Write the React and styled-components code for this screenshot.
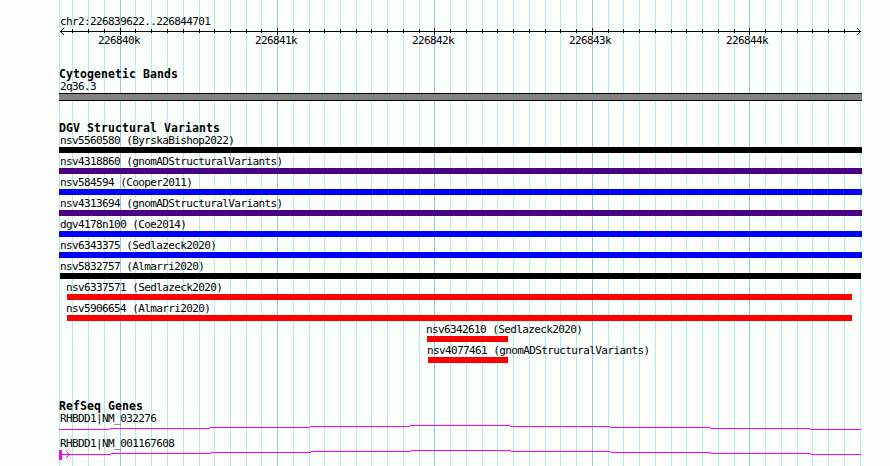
import styled, { createGlobalStyle } from "styled-components"

const GlobalStyle = createGlobalStyle`
  body {
    margin: 0;
    background-color: #fcfefc;
  }
`

const Browser = styled.main`
  position: relative;
  width: 890px;
  height: 466px;
  box-sizing: border-box;
  padding: 14px 28px 0 59px;
  overflow: hidden;
  background-color: #fcfefc;
  color: #000;
  font-family: "DejaVu Sans Mono", monospace;
`

const GridLayer = styled.svg`
  position: absolute;
  top: 0;
  left: 0;
  shape-rendering: crispEdges;
`

const Track = styled.section`
  position: relative;
  display: flex;
  flex-direction: column;
  height: ${(props) => props.$height}px;
`

const TrackTitle = styled.h2`
  margin: 0;
  height: 12px;
  font-size: 11.5px;
  font-weight: bold;
  line-height: 12px;
  letter-spacing: 0.077px;
  white-space: pre;
`

const Label = styled.span`
  display: block;
  height: 13px;
  margin-left: ${(props) => props.$indent || 1}px;
  font-size: 11px;
  line-height: 13px;
  letter-spacing: -0.61px;
  white-space: pre;
`

const RegionLabel = styled(Label)`
  height: 14px;
  line-height: 15px;
`

const Drawing = styled.svg`
  display: block;
  flex: none;
  shape-rendering: crispEdges;
`

const ScaleLabels = styled.div`
  display: flex;
  gap: 115px;
  padding-left: 39px;
`

const ScaleLabel = styled(Label)`
  width: 42px;
  margin-left: 0;
  line-height: 11px;
`

const Band = styled.div`
  box-sizing: border-box;
  width: 803px;
  height: 8px;
  border: solid #000;
  border-width: 1px 0;
  background-color: #848284;
`

const Feature = styled.div`
  height: 21px;
`

const Bar = styled.div`
  width: ${(props) => props.$width}px;
  height: 6px;
  margin-left: ${(props) => props.$start}px;
  background-color: ${(props) => props.$color};
`

const GRID = [
  59, 72, 88, 104, 120, 135, 151, 167, 183, 199, 214, 230, 246, 261, 277, 293, 309, 324,
  340, 356, 371, 387, 403, 419, 434, 450, 466, 482, 497, 513, 529, 545, 560, 576, 592,
  608, 623, 639, 655, 671, 686, 702, 718, 734, 749, 765, 781, 797, 812, 828, 844, 860,
]
const MAJOR = [120, 277, 434, 592, 749]

const SCALE = ["226840k", "226841k", "226842k", "226843k", "226844k"]

const BLACK = "#000"
const PURPLE = "#4b0082"
const BLUE = "#00f"
const RED = "#f00"

const VARIANTS = [
  { name: "nsv5560580 (ByrskaBishop2022)", start: 0, width: 803, color: BLACK },
  { name: "nsv4318860 (gnomADStructuralVariants)", start: 0, width: 803, color: PURPLE },
  { name: "nsv584594 (Cooper2011)", start: 0, width: 803, color: BLUE },
  { name: "nsv4313694 (gnomADStructuralVariants)", start: 0, width: 803, color: PURPLE },
  { name: "dgv4178n100 (Coe2014)", start: 0, width: 803, color: BLUE },
  { name: "nsv6343375 (Sedlazeck2020)", start: 0, width: 803, color: BLUE },
  { name: "nsv5832757 (Almarri2020)", start: 1, width: 801, color: BLACK },
  { name: "nsv6337571 (Sedlazeck2020)", start: 8, width: 785, color: RED, indent: 7 },
  { name: "nsv5906654 (Almarri2020)", start: 8, width: 785, color: RED, indent: 7 },
  { name: "nsv6342610 (Sedlazeck2020)", start: 368, width: 81, color: RED, indent: 367 },
  { name: "nsv4077461 (gnomADStructuralVariants)", start: 369, width: 80, color: RED, indent: 368 },
]

const GridLines = () => (
  <GridLayer width="890" height="466">
    {GRID.map((x) => (
      <rect
        key={x}
        x={x}
        y="0"
        width="1"
        height="466"
        fill={MAJOR.includes(x) ? "#87ceeb" : "#afeeee"}
      />
    ))}
  </GridLayer>
)

// One-pixel arrow head, 7 rows high, pointing left (dir -1) or right (dir 1)
const ArrowHead = ({ tip, y, dir }) =>
  [-3, -2, -1, 0, 1, 2, 3].map((row) => (
    <rect key={row} x={tip - dir * Math.abs(row)} y={y + row} width="1" height="1" />
  ))

const Ruler = () => (
  <Drawing width="803" height="7">
    <rect x="1" y="3" width="801" height="1" />
    <ArrowHead tip={1} y={3} dir={-1} />
    <ArrowHead tip={801} y={3} dir={1} />
    {GRID.slice(1, -1).map((x) => {
      const major = MAJOR.includes(x)
      return (
        <rect key={x} x={x - 59} y={major ? 0 : 1} width="1" height={major ? 7 : 4} />
      )
    })}
  </Drawing>
)

// Intron line that climbs by one pixel to the middle and falls back again
const Intron = ({ shift = 0, exon }) => {
  const steps = [0, 51, 151, 251, 351, 451, 551, 651, 751, 802]
  const levels = [4, 3, 2, 1, 0, 1, 2, 3, 4]
  const edges = steps.map((x, i) => (i > 0 && i < steps.length - 1 ? x + shift : x))

  return (
    <Drawing width="803" height="12" fill="#f0f">
      {levels.map((y, i) => (
        <rect key={i} x={edges[i]} y={y} width={edges[i + 1] - edges[i]} height="1" />
      ))}
      {exon && (
        <>
          <rect x="0" y="0" width="3" height="10" />
          <ArrowHead tip={10} y={4} dir={1} />
        </>
      )}
    </Drawing>
  )
}

const App = () => (
  <>
    <GlobalStyle />
    <Browser>
      <GridLines />

      <Track $height={54}>
        <RegionLabel>chr2:226839622..226844701</RegionLabel>
        <Ruler />
        <ScaleLabels>
          {SCALE.map((text) => (
            <ScaleLabel key={text}>{text}</ScaleLabel>
          ))}
        </ScaleLabels>
      </Track>

      <Track $height={54}>
        <TrackTitle>Cytogenetic Bands</TrackTitle>
        <Label>2q36.3</Label>
        <Band />
      </Track>

      <Track $height={278}>
        <TrackTitle>DGV Structural Variants</TrackTitle>
        {VARIANTS.map((variant) => (
          <Feature key={variant.name}>
            <Label $indent={variant.indent}>{variant.name}</Label>
            <Bar $start={variant.start} $width={variant.width} $color={variant.color} />
          </Feature>
        ))}
      </Track>

      <Track $height={66}>
        <TrackTitle>RefSeq Genes</TrackTitle>
        <Label>RHBDD1|NM_032276</Label>
        <Intron />
        <Label>RHBDD1|NM_001167608</Label>
        <Intron shift={1} exon />
      </Track>
    </Browser>
  </>
)

export default App
